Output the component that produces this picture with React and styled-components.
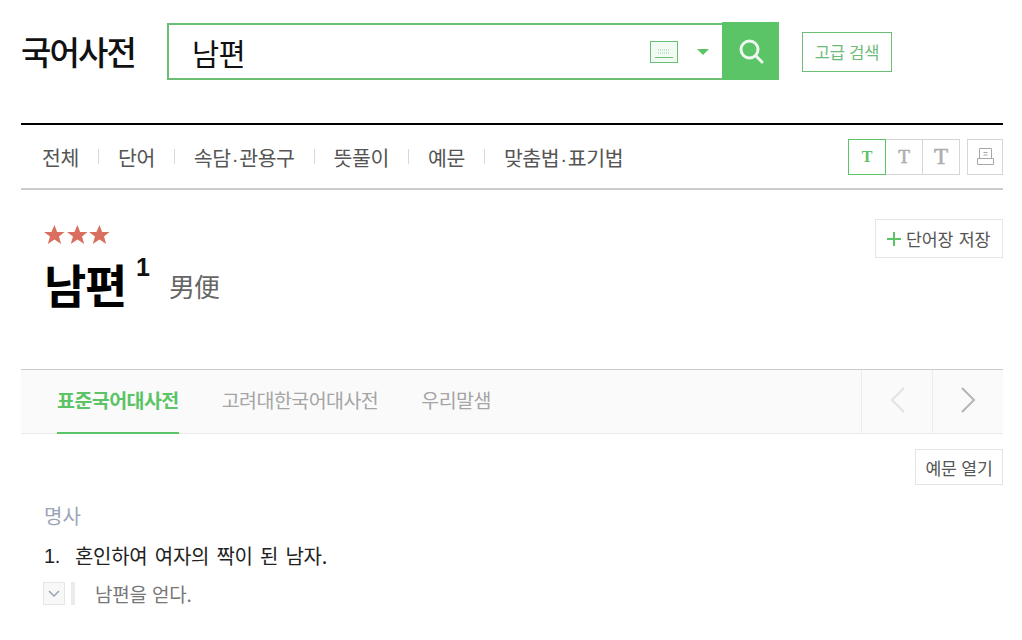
import React from 'react'
import styled, { createGlobalStyle } from 'styled-components'

const GREEN = '#5ac466'
const KR = '"Noto Sans CJK KR", "Liberation Sans", sans-serif'

const GlobalStyle = createGlobalStyle`
  html, body {
    margin: 0;
    padding: 0;
    background: #fff;
    font-family: ${KR};
    overflow: hidden;
  }
`

const Page = styled.div`
  width: 982px;
  height: 640px;
  margin-left: 21px;
  overflow: hidden;
`

const Header = styled.header`
  display: flex;
  align-items: flex-start;
  height: 125px;
  padding-top: 22px;
  box-sizing: border-box;
  border-bottom: 2px solid #000;
`

const Logo = styled.h1`
  margin: 0;
  width: 146px;
  font-size: 33px;
  line-height: 58px;
  font-weight: 500;
  letter-spacing: -1.9px;
  color: #111;
`

const SearchBox = styled.div`
  display: flex;
  align-items: center;
  width: 555px;
  height: 57px;
  margin-top: 1px;
  padding: 0 13px 0 23px;
  box-sizing: border-box;
  border: 2px solid #6abf75;
  border-right: 0;
`

const Query = styled.span`
  flex: 1;
  font-size: 29.5px;
  letter-spacing: -0.6px;
  color: #111;
`

const Caret = styled.span`
  width: 0;
  height: 0;
  margin-left: 18px;
  border-left: 6px solid transparent;
  border-right: 6px solid transparent;
  border-top: 6px solid ${GREEN};
`

const SearchButton = styled.button`
  display: flex;
  align-items: center;
  justify-content: center;
  width: 57px;
  height: 58px;
  padding: 0;
  border: 0;
  background: ${GREEN};
`

const AdvancedButton = styled.button`
  width: 90px;
  height: 40px;
  margin: 10px 0 0 23px;
  padding: 0;
  border: 1px solid #6abf75;
  background: #fff;
  color: #6dbb78;
  font-family: ${KR};
  font-size: 16.5px;
  letter-spacing: -0.2px;
  word-spacing: 1px;
`

const Nav = styled.nav`
  display: flex;
  align-items: center;
  height: 65px;
  box-sizing: border-box;
  border-bottom: 2px solid #ccc;
  padding: 0 0 0 21px;
`

const NavItem = styled.a`
  position: relative;
  font-size: 20.5px;
  letter-spacing: -0.4px;
  color: #555;
  margin-right: 39px;

  &:not(:last-of-type)::after {
    content: '';
    position: absolute;
    top: 7px;
    right: -20px;
    width: 1px;
    height: 15px;
    background: #d8d8d8;
  }
`

const NavDot = styled.span`
  font-family: "Liberation Sans", sans-serif;
  margin: 0 1px;
`

const Tools = styled.div`
  display: flex;
  margin-left: auto;
  margin-top: 0;
`

const SizeButton = styled.span`
  display: flex;
  align-items: center;
  justify-content: center;
  width: 36px;
  height: 34px;
  margin-left: ${({ $active }) => ($active ? 0 : '-1px')};
  position: relative;
  z-index: ${({ $active }) => ($active ? 1 : 0)};
  border: ${({ $active }) => ($active ? `1px solid ${GREEN}` : '1px solid #d6d6d6')};
  font-family: "Liberation Serif", serif;
  font-weight: ${({ $active }) => ($active ? 700 : 400)};
  -webkit-text-stroke: ${({ $active }) => ($active ? '0' : '0.6px')};
  font-size: ${({ $size }) => $size}px;
  color: ${({ $active }) => ($active ? GREEN : '#adadad')};
`

const PrintButton = styled.span`
  display: flex;
  align-items: center;
  justify-content: center;
  width: 34px;
  height: 34px;
  margin-left: 7px;
  border: 1px solid #d6d6d6;
`

const Entry = styled.section`
  position: relative;
  height: 179px;
  padding: 35px 0 0 23px;
  box-sizing: border-box;
`

const Stars = styled.div`
  display: flex;
  gap: 1.5px;
  height: 22px;
`

const Headword = styled.div`
  display: flex;
  align-items: flex-start;
  margin-top: 7px;
`

const Word = styled.h2`
  margin: 0;
  font-size: 46px;
  line-height: 58px;
  font-weight: 700;
  letter-spacing: -1.3px;
  color: #000;
`

const Sup = styled.span`
  margin: 0 0 0 10px;
  font-family: "Liberation Sans", sans-serif;
  font-size: 25px;
  font-weight: 700;
  line-height: 26px;
  color: #111;
`

const Hanja = styled.span`
  margin: 14px 0 0 19px;
  font-size: 26px;
  line-height: 36px;
  letter-spacing: -1px;
  color: #666;
`

const SaveButton = styled.button`
  position: absolute;
  top: 29px;
  right: 0;
  display: flex;
  align-items: center;
  gap: 5px;
  height: 39px;
  width: 128px;
  padding: 0 0 0 11px;
  box-sizing: border-box;
  border: 1px solid #e6e6e6;
  background: #fff;
  color: #555;
  font-family: ${KR};
  font-size: 17.3px;
  letter-spacing: -0.2px;
  word-spacing: 2px;
  white-space: nowrap;
`

const Tabs = styled.div`
  display: flex;
  height: 65px;
  box-sizing: border-box;
  border-top: 1px solid #ccc;
  border-bottom: 1px solid #eaeaea;
  background: #fafafa;
  padding-left: 36px;
`

const Tab = styled.a`
  height: 64px;
  box-sizing: border-box;
  margin-right: 43px;
  line-height: 60px;
  font-size: 19.5px;
  letter-spacing: -0.55px;
  font-weight: ${({ $active }) => ($active ? 700 : 400)};
  color: ${({ $active }) => ($active ? GREEN : '#a5a5a5')};
  border-bottom: ${({ $active }) => ($active ? `2px solid ${GREEN}` : '0')};
`

const Pager = styled.div`
  display: flex;
  margin-left: auto;
`

const PagerButton = styled.span`
  display: flex;
  align-items: center;
  justify-content: center;
  width: 70px;
  height: 59px;
  padding-bottom: 4px;
  border-left: 1px solid #ececec;
`

const Toolbar = styled.div`
  display: flex;
  justify-content: flex-end;
  padding-top: 15px;
`

const ExampleButton = styled.button`
  width: 88px;
  height: 36px;
  padding: 0;
  border: 1px solid #e4e4e4;
  background: #fff;
  color: #555;
  font-family: ${KR};
  font-size: 17.2px;
  letter-spacing: -0.2px;
  word-spacing: 1px;
`

const Definition = styled.div`
  padding: 17px 0 0 23px;
`

const Pos = styled.div`
  font-size: 20px;
  line-height: 28px;
  color: #9aa5b8;
`

const Sense = styled.div`
  display: flex;
  margin-top: 13px;
  font-size: 20px;
  line-height: 26px;
  letter-spacing: -0.3px;
  word-spacing: 3.2px;
  color: #222;
`

const SenseNumber = styled.span`
  width: 31px;
  font-family: "Liberation Sans", sans-serif;
`

const Example = styled.div`
  display: flex;
  align-items: center;
  margin: 12px 0 0 -1px;
  height: 24px;
`

const ToggleButton = styled.span`
  display: flex;
  align-items: center;
  justify-content: center;
  width: 22px;
  height: 23px;
  box-sizing: border-box;
  border: 1px solid #e6e6e6;
  background: #f8f8f8;
`

const ExampleBar = styled.span`
  width: 4px;
  height: 23px;
  margin: 0 20px 0 6px;
  background: #ebebeb;
`

const ExampleText = styled.span`
  font-size: 19px;
  letter-spacing: -0.2px;
  word-spacing: 1px;
  color: #777;
`

const Star = () => (
  <svg width="21" height="20" viewBox="0 0 21 20">
    <path fill="#d9705f" d="M10.5 0l2.600 7h7.400L15 11.600 17.200 19l-6.700-4.400L3.800 19 6 11.600 0 7h7.400z" />
  </svg>
)

const KeyboardIcon = () => (
  <svg width="29" height="22" viewBox="0 0 29 22" style={{ flexShrink: 0 }}>
    <rect x="0.500" y="0.500" width="27" height="21" fill="#f3faf4" stroke="#6abf75" />
    <path stroke="#8ecf97" strokeDasharray="1 1" d="M8 9h12M8 12h12" />
    <path stroke="#6abf75" d="M5 16.500h18" />
  </svg>
)

const SearchIcon = () => (
  <svg width="26" height="26" viewBox="0 0 26 26" fill="none" stroke="#eef8ef" strokeWidth="3">
    <circle cx="11.500" cy="11.500" r="8.500" />
    <path strokeLinecap="round" d="M18 18l6 6" />
  </svg>
)

const PrintIcon = () => (
  <svg width="17" height="18" viewBox="0 0 17 18" fill="none" stroke="#a8a8a8">
    <path d="M2.500 10.500v-10h12v10M.5 10.500h16v6H.5z" />
    <path d="M6.500 4.500h4M6.500 7h4" />
  </svg>
)

const Chevron = ({ dir, color }) => (
  <svg width="15" height="26" viewBox="0 0 15 26" fill="none" stroke={color} strokeWidth="2">
    <path d={dir === 'left' ? 'M14 1L2 13l12 12' : 'M1 1l12 12L1 25'} />
  </svg>
)

const PlusIcon = () => (
  <svg width="14" height="14" viewBox="0 0 14 14" stroke={GREEN} strokeWidth="2">
    <path d="M7 0v14M0 7h14" />
  </svg>
)

const ChevronDown = () => (
  <svg width="12" height="7" viewBox="0 0 12 7" fill="none" stroke="#9aa5b8" strokeWidth="1.500">
    <path d="M1 1l5 5 5-5" />
  </svg>
)

const navItems = ['전체', '단어', '속담·관용구', '뜻풀이', '예문', '맞춤법·표기법']
const sizes = [16, 19, 23]

// the middle dot is much narrower in the reference than in the CJK font
const withDot = (label) => {
  const [left, right] = label.split('·')
  if (!right) return label
  return (
    <>
      {left}
      <NavDot>·</NavDot>
      {right}
    </>
  )
}

export default function App() {
  return (
    <Page>
      <GlobalStyle />
      <Header>
        <Logo>국어사전</Logo>
        <SearchBox>
          <Query>남편</Query>
          <KeyboardIcon />
          <Caret />
        </SearchBox>
        <SearchButton>
          <SearchIcon />
        </SearchButton>
        <AdvancedButton>고급 검색</AdvancedButton>
      </Header>
      <Nav>
        {navItems.map((item) => (
          <NavItem key={item}>{withDot(item)}</NavItem>
        ))}
        <Tools>
          {sizes.map((size, i) => (
            <SizeButton key={size} $size={size} $active={i === 0}>
              T
            </SizeButton>
          ))}
          <PrintButton>
            <PrintIcon />
          </PrintButton>
        </Tools>
      </Nav>
      <Entry>
        <Stars>
          <Star />
          <Star />
          <Star />
        </Stars>
        <Headword>
          <Word>남편</Word>
          <Sup>1</Sup>
          <Hanja>男便</Hanja>
        </Headword>
        <SaveButton>
          <PlusIcon />
          단어장 저장
        </SaveButton>
      </Entry>
      <Tabs>
        <Tab $active>표준국어대사전</Tab>
        <Tab>고려대한국어대사전</Tab>
        <Tab>우리말샘</Tab>
        <Pager>
          <PagerButton>
            <Chevron dir="left" color="#e2e2e2" />
          </PagerButton>
          <PagerButton>
            <Chevron dir="right" color="#b5b5b5" />
          </PagerButton>
        </Pager>
      </Tabs>
      <Toolbar>
        <ExampleButton>예문 열기</ExampleButton>
      </Toolbar>
      <Definition>
        <Pos>명사</Pos>
        <Sense>
          <SenseNumber>1.</SenseNumber>
          혼인하여 여자의 짝이 된 남자.
        </Sense>
        <Example>
          <ToggleButton>
            <ChevronDown />
          </ToggleButton>
          <ExampleBar />
          <ExampleText>남편을 얻다.</ExampleText>
        </Example>
      </Definition>
    </Page>
  )
}
